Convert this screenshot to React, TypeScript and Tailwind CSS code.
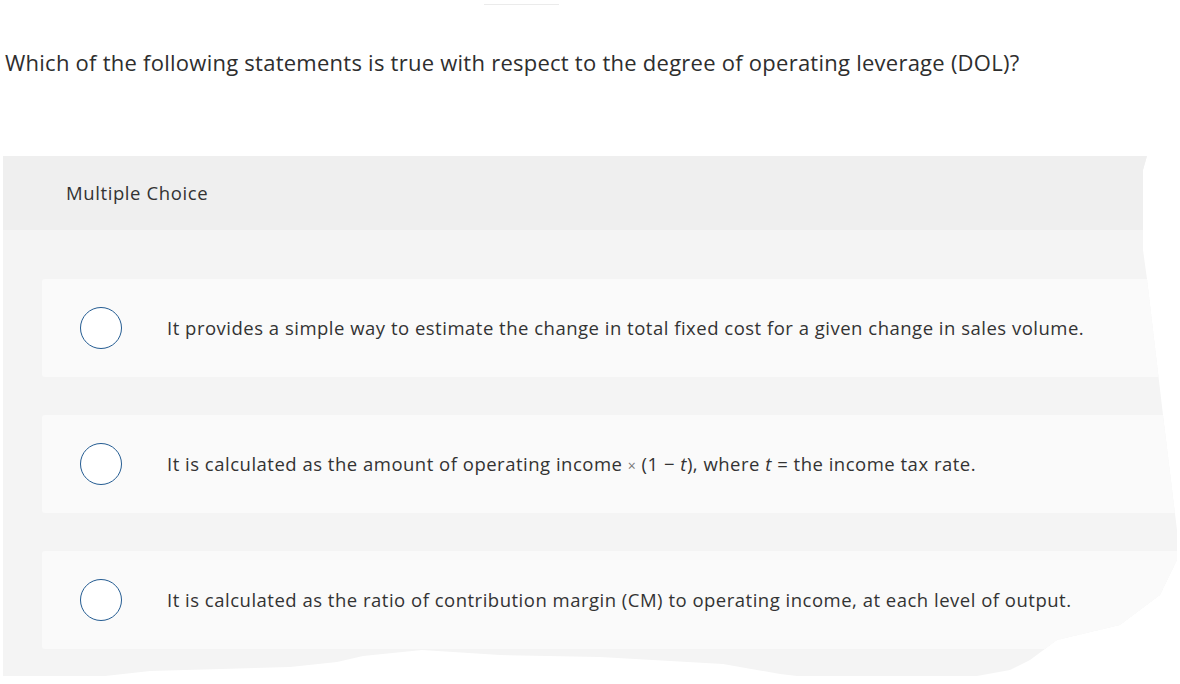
import React from "react";

const options = [
  <>It provides a simple way to estimate the change in total fixed cost for a given change in sales volume.</>,
  <>
    It is calculated as the amount of operating income <span className="text-[#777] text-[14px]">×</span> (1 − <i>t</i>), where <i>t</i> = the income tax rate.
  </>,
  <>It is calculated as the ratio of contribution margin (CM) to operating income, at each level of output.</>,
];

export default function App() {
  return (
    <div
      className="w-[1180px] h-[684px] bg-white overflow-hidden text-[#333]"
      style={{ fontFamily: "'Open Sans', 'Liberation Sans', sans-serif" }}
    >
      <div className="h-px w-[75px] ml-[484px] mt-[4px] bg-[#ebebeb]" />
      <div className="mt-[42px] pl-[5px] text-[22px] leading-[30px] tracking-[0.25px] text-[#2e2e2e]">
        Which of the following statements is true with respect to the degree of operating leverage (DOL)?
      </div>
      <div className="mt-[79px] ml-[3px] w-[1177px] h-[520px] bg-[#f4f4f4] flex flex-col [clip-path:polygon(0px_0px,1144px_0px,1140px_14px,1140px_94px,1144px_123px,1160px_259px,1174px_374px,1174px_404px,1157px_439px,1117px_469px,1054px_484px,1027px_504px,1007px_514px,974px_520px,794px_520px,777px_518px,720px_508px,597px_501px,497px_499px,419px_494px,360px_500px,334px_506px,287px_511px,147px_515px,102px_520px,0px_520px)]">
        <div className="h-[74px] bg-[#efefef] flex items-center pl-[63px] text-[18.5px] tracking-[0.6px]">
          Multiple Choice
        </div>
        <div className="flex flex-col gap-[38px] pt-[49px] pl-[39px]">
          {options.map((o, i) => (
            <div
              key={i}
              className="h-[98px] bg-[#fafafa] rounded-[3px] flex items-center"
            >
              <div className="ml-[38px] w-[42px] h-[42px] rounded-full bg-white border-[1.5px] border-[#245c92] shrink-0" />
              <div className="ml-[45px] text-[18.5px] tracking-[0.5px] whitespace-nowrap">{o}</div>
            </div>
          ))}
        </div>
      </div>
    </div>
  );
}
